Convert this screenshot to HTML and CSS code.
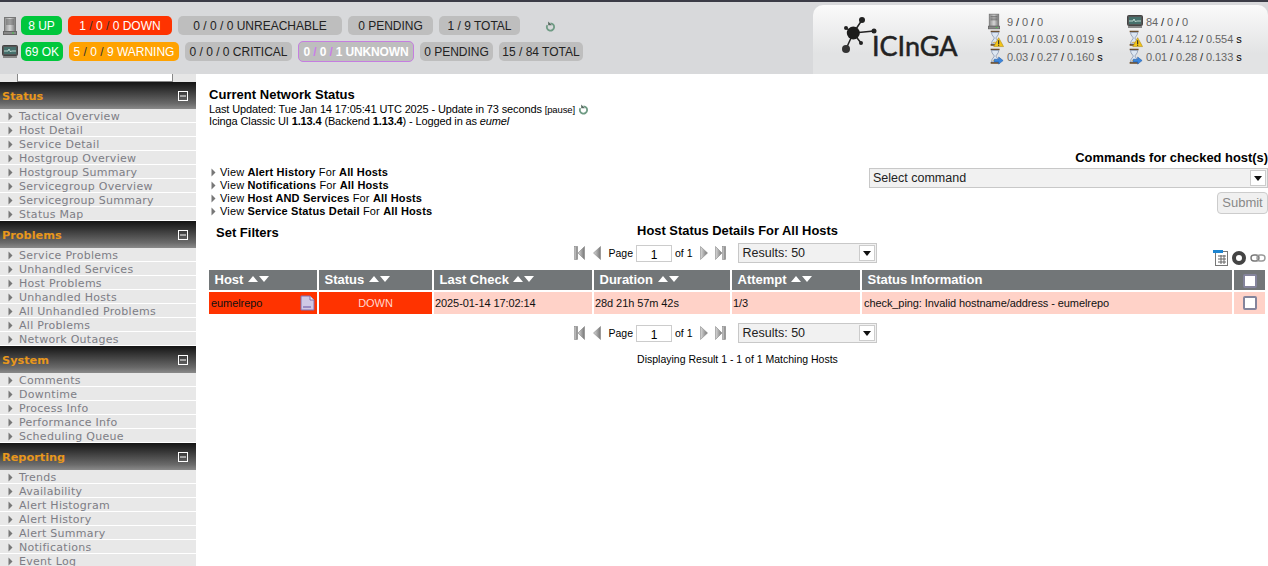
FILE: index.html
```html
<!DOCTYPE html>
<html lang="en">
<head>
<meta charset="utf-8">
<title>Current Network Status</title>
<link rel="stylesheet" href="styles.css">
</head>
<body>
<svg class="defs" width="0" height="0" aria-hidden="true">
  <defs>
    <linearGradient id="srv" x1="0" x2="1" y1="0" y2="0"><stop offset="0" stop-color="#8d8d8d"/><stop offset=".5" stop-color="#d5d5d5"/><stop offset="1" stop-color="#777"/></linearGradient>
    <linearGradient id="pg" x1="0" x2="1" y1="0" y2="0"><stop offset="0" stop-color="#d8d8d8"/><stop offset="1" stop-color="#777"/></linearGradient>
    <symbol id="server" viewBox="0 0 14 18"><rect x="1.5" y="0.5" width="11" height="14" fill="url(#srv)" stroke="#777"/><path d="M3 3h8M3 5h8M3 7h8" stroke="#666"/><rect x="0.5" y="14.5" width="13" height="3" fill="#888" stroke="#666"/><rect x="9" y="15.500" width="2" height="1" fill="#4c4"/></symbol>
    <symbol id="monitor" viewBox="0 0 16 13"><rect x="0.500" y="0.500" width="15" height="10" rx="1" fill="#555" stroke="#444"/><rect x="2" y="2" width="12" height="7" fill="#46706c"/><path d="M2 6h4l1-2 1.500 3 1-1h4.500" stroke="#d8f0e8" fill="none" stroke-width=".8"/><rect x="1" y="11" width="14" height="2" fill="#888"/></symbol>
    <symbol id="glass" viewBox="0 0 18 19"><path d="M3 1h10M3 16h10" stroke="#6b4a24" stroke-width="2"/><path d="M4 2h8c0 4-3 5-3 6.500S12 11 12 15H4c0-4 3-5 3-6.500S4 6 4 2z" fill="#dce6f2" stroke="#7a8aa6" stroke-width=".8"/><path d="M5 14c1-2 5-2 6 0z" fill="#d6b36a"/></symbol>
    <symbol id="warn" viewBox="0 0 18 19"><use href="#glass"/><path d="M12 8l5.500 10h-11z" fill="#f4c518" stroke="#a98510" stroke-width=".6"/><path d="M12 11v4" stroke="#222" stroke-width="1.200"/><circle cx="12" cy="16.500" r=".7" fill="#222"/></symbol>
    <symbol id="next" viewBox="0 0 18 19"><use href="#glass"/><path d="M7 12h5V9.500l5 4-5 4V15H7z" fill="#3c86dc" stroke="#1f5ba8" stroke-width=".6"/></symbol>
    <symbol id="refresh" viewBox="0 0 12 12"><path d="M6 2.500a4 4 0 1 1-3.500 2" fill="none" stroke="#6f9b84" stroke-width="2"/><path d="M3.500 0.500v4h4z" fill="#56685e"/></symbol>
    <symbol id="bullet" viewBox="0 0 5 9"><path d="M0.500 0.500l4 4-4 4z" fill="#777"/></symbol>
    <symbol id="first" viewBox="0 0 11 14"><rect x="0.500" y="0.500" width="3" height="13" fill="url(#pg)" stroke="#888" stroke-width=".6"/><path d="M10.500 0.500v13L4 7z" fill="url(#pg)" stroke="#888" stroke-width=".6"/></symbol>
    <symbol id="prev" viewBox="0 0 8 14"><path d="M7.500 0.500v13L0.500 7z" fill="url(#pg)" stroke="#888" stroke-width=".6"/></symbol>
    <symbol id="nxt" viewBox="0 0 8 14"><path d="M0.500 0.500v13L7.500 7z" fill="url(#pg)" stroke="#888" stroke-width=".6"/></symbol>
    <symbol id="last" viewBox="0 0 11 14"><rect x="7.500" y="0.500" width="3" height="13" fill="url(#pg)" stroke="#888" stroke-width=".6"/><path d="M0.500 0.500v13L7 7z" fill="url(#pg)" stroke="#888" stroke-width=".6"/></symbol>
    <symbol id="minus" viewBox="0 0 10 10"><rect x="0.500" y="0.500" width="9" height="9" fill="none" stroke="#fff"/><path d="M2 5h6" stroke="#fff"/></symbol>
    <symbol id="sort" viewBox="0 0 21 6"><path d="M0 6l5-6 5 6zM11 0h10l-5 6z" fill="#fff"/></symbol>
    <symbol id="doc" viewBox="0 0 15 16"><path d="M1 1h9l4 4v10H1z" fill="#cfc8e6" stroke="#8070b0"/><path d="M10 1v4h4" fill="#eee" stroke="#8070b0"/><path d="M3 11h8v2H3z" fill="#9a8cc4"/></symbol>
    <symbol id="grid" viewBox="0 0 15 16"><rect x="2.500" y="1.500" width="12" height="14" fill="#fff" stroke="#777"/><rect x="0" y="0" width="10" height="3" fill="#1d84d0"/><path d="M5 6h8M5 9h8M5 12h8M8 5v9M11 5v9" stroke="#666"/></symbol>
    <symbol id="disc" viewBox="0 0 14 14"><circle cx="7" cy="7" r="5" fill="none" stroke="#444" stroke-width="4"/></symbol>
    <symbol id="chain" viewBox="0 0 16 8"><rect x="1" y="1" width="8" height="6" rx="3" fill="none" stroke="#777" stroke-width="1.400"/><rect x="7" y="1" width="8" height="6" rx="3" fill="none" stroke="#999" stroke-width="1.400"/></symbol>
  </defs>
</svg>

<header class="top">
  <div class="summary">
    <div class="sumrow">
      <svg class="ic-server"><use href="#server"/></svg>
      <span class="pill ok p-up">8 UP</span>
      <span class="pill bad p-down">1 <i class="sl">/</i> 0 <i class="sl">/</i> 0 DOWN</span>
      <span class="pill p-unreach">0 / 0 / 0 UNREACHABLE</span>
      <span class="pill p-pend1">0 PENDING</span>
      <span class="pill p-tot1">1 / 9 TOTAL</span>
      <svg class="ic-refresh head-refresh"><use href="#refresh"/></svg>
    </div>
    <div class="sumrow">
      <svg class="ic-monitor"><use href="#monitor"/></svg>
      <span class="pill ok p-okk">69 OK</span>
      <span class="pill warn p-warn">5 <i class="sl">/</i> 0 <i class="sl">/</i> 9 WARNING</span>
      <span class="pill p-crit">0 / 0 / 0 CRITICAL</span>
      <span class="pill unk p-unk">0 <i class="sl-p">/</i> 0 <i class="sl-p">/</i> 1 UNKNOWN</span>
      <span class="pill p-pend2">0 PENDING</span>
      <span class="pill p-tot2">15 / 84 TOTAL</span>
    </div>
  </div>
  <div class="brand">
    <div class="logo">
      <svg class="logo-mark" viewBox="0 0 40 40"><g stroke="#222" stroke-width="1.500"><path d="M15.300 17L24 4M15.300 17L8 33M15.300 17L36 15M15.300 17L23 27M15.300 17L8 12"/></g><circle cx="15.300" cy="17" r="6.500" fill="#1c1c1c"/><circle cx="24" cy="4" r="3" fill="#222"/><circle cx="8" cy="33" r="4" fill="#333"/><circle cx="36" cy="15" r="2.500" fill="#222"/><circle cx="23" cy="27" r="2" fill="#222"/><circle cx="8" cy="12" r="2" fill="#222"/></svg>
      <span class="logo-text">ICInGA</span>
    </div>
    <div class="stats">
      <div class="stat"><svg class="st-icon st-s"><use href="#server"/></svg><span class="stat-v">9 <i>/</i> 0 <i>/</i> 0</span></div>
      <div class="stat"><svg class="st-icon"><use href="#warn"/></svg><span class="stat-v">0.01 <i>/</i> 0.03 <i>/</i> 0.019 <b>s</b></span></div>
      <div class="stat"><svg class="st-icon"><use href="#next"/></svg><span class="stat-v">0.03 <i>/</i> 0.27 <i>/</i> 0.160 <b>s</b></span></div>
    </div>
    <div class="stats">
      <div class="stat"><svg class="st-icon st-m"><use href="#monitor"/></svg><span class="stat-v">84 <i>/</i> 0 <i>/</i> 0</span></div>
      <div class="stat"><svg class="st-icon"><use href="#warn"/></svg><span class="stat-v">0.01 <i>/</i> 4.12 <i>/</i> 0.554 <b>s</b></span></div>
      <div class="stat"><svg class="st-icon"><use href="#next"/></svg><span class="stat-v">0.01 <i>/</i> 0.28 <i>/</i> 0.133 <b>s</b></span></div>
    </div>
  </div>
</header>

<div class="page">
  <nav class="side">
    <div class="search"></div>

    <h2 class="sec"><span>Status</span><svg class="minus"><use href="#minus"/></svg></h2>
    <ul class="menu">
      <li><svg><use href="#bullet"/></svg>Tactical Overview</li>
      <li><svg><use href="#bullet"/></svg>Host Detail</li>
      <li><svg><use href="#bullet"/></svg>Service Detail</li>
      <li><svg><use href="#bullet"/></svg>Hostgroup Overview</li>
      <li><svg><use href="#bullet"/></svg>Hostgroup Summary</li>
      <li><svg><use href="#bullet"/></svg>Servicegroup Overview</li>
      <li><svg><use href="#bullet"/></svg>Servicegroup Summary</li>
      <li><svg><use href="#bullet"/></svg>Status Map</li>
    </ul>

    <h2 class="sec"><span>Problems</span><svg class="minus"><use href="#minus"/></svg></h2>
    <ul class="menu">
      <li><svg><use href="#bullet"/></svg>Service Problems</li>
      <li><svg><use href="#bullet"/></svg>Unhandled Services</li>
      <li><svg><use href="#bullet"/></svg>Host Problems</li>
      <li><svg><use href="#bullet"/></svg>Unhandled Hosts</li>
      <li><svg><use href="#bullet"/></svg>All Unhandled Problems</li>
      <li><svg><use href="#bullet"/></svg>All Problems</li>
      <li><svg><use href="#bullet"/></svg>Network Outages</li>
    </ul>

    <h2 class="sec"><span>System</span><svg class="minus"><use href="#minus"/></svg></h2>
    <ul class="menu">
      <li><svg><use href="#bullet"/></svg>Comments</li>
      <li><svg><use href="#bullet"/></svg>Downtime</li>
      <li><svg><use href="#bullet"/></svg>Process Info</li>
      <li><svg><use href="#bullet"/></svg>Performance Info</li>
      <li><svg><use href="#bullet"/></svg>Scheduling Queue</li>
    </ul>

    <h2 class="sec"><span>Reporting</span><svg class="minus"><use href="#minus"/></svg></h2>
    <ul class="menu">
      <li><svg><use href="#bullet"/></svg>Trends</li>
      <li><svg><use href="#bullet"/></svg>Availability</li>
      <li><svg><use href="#bullet"/></svg>Alert Histogram</li>
      <li><svg><use href="#bullet"/></svg>Alert History</li>
      <li><svg><use href="#bullet"/></svg>Alert Summary</li>
      <li><svg><use href="#bullet"/></svg>Notifications</li>
      <li><svg><use href="#bullet"/></svg>Event Log</li>
    </ul>
  </nav>

  <main class="main">
    <section class="info">
      <h1 class="title">Current Network Status</h1>
      <div class="line">Last Updated: Tue Jan 14 17:05:41 UTC 2025 - Update in 73 seconds <small>[pause]</small> <svg class="ic-refresh-s"><use href="#refresh"/></svg></div>
      <div class="line">Icinga Classic UI <b>1.13.4</b> (Backend <b>1.13.4</b>) - Logged in as <i>eumel</i></div>
    </section>

    <section class="tools">
      <ul class="links">
        <li><svg><use href="#bullet"/></svg>View <b>Alert History</b> For <b>All Hosts</b></li>
        <li><svg><use href="#bullet"/></svg>View <b>Notifications</b> For <b>All Hosts</b></li>
        <li><svg><use href="#bullet"/></svg>View <b>Host AND Services</b> For <b>All Hosts</b></li>
        <li><svg><use href="#bullet"/></svg>View <b>Service Status Detail</b> For <b>All Hosts</b></li>
      </ul>
      <div class="commands">
        <div class="cmd-title">Commands for checked host(s)</div>
        <div class="select cmd-select"><span>Select command</span><span class="arrow"></span></div>
        <div class="submit">Submit</div>
      </div>
    </section>

    <section class="mid">
      <div class="filters">Set Filters</div>
      <div class="mid-title">Host Status Details For All Hosts</div>
    </section>

    <div class="pager">
      <svg class="pg-w"><use href="#first"/></svg>
      <svg class="pg-n"><use href="#prev"/></svg>
      <span class="pg-label">Page</span><span class="pg-input">1</span><span class="pg-of">of 1</span>
      <svg class="pg-n"><use href="#nxt"/></svg>
      <svg class="pg-w"><use href="#last"/></svg>
      <div class="select res-select"><span>Results: 50</span><span class="arrow"></span></div>
    </div>

    <div class="tbl-icons">
      <svg class="ti-grid"><use href="#grid"/></svg>
      <svg class="ti-disc"><use href="#disc"/></svg>
      <svg class="ti-chain"><use href="#chain"/></svg>
    </div>

    <table class="status">
      <colgroup>
        <col class="c1"><col class="c2"><col class="c3"><col class="c4"><col class="c5"><col class="c6"><col class="c7">
      </colgroup>
      <thead>
        <tr>
          <th>Host <svg class="sort"><use href="#sort"/></svg></th>
          <th>Status <svg class="sort"><use href="#sort"/></svg></th>
          <th>Last Check <svg class="sort"><use href="#sort"/></svg></th>
          <th>Duration <svg class="sort"><use href="#sort"/></svg></th>
          <th>Attempt <svg class="sort"><use href="#sort"/></svg></th>
          <th>Status Information</th>
          <th class="chk"><span class="box box-head"></span></th>
        </tr>
      </thead>
      <tbody>
        <tr>
          <td class="down host-cell"><span>eumelrepo</span><svg class="doc"><use href="#doc"/></svg></td>
          <td class="down st-cell">DOWN</td>
          <td>2025-01-14 17:02:14</td>
          <td>28d 21h 57m 42s</td>
          <td>1/3</td>
          <td class="msg">check_ping: Invalid hostname/address - eumelrepo</td>
          <td class="chk"><span class="box"></span></td>
        </tr>
      </tbody>
    </table>

    <div class="pager pager-bottom">
      <svg class="pg-w"><use href="#first"/></svg>
      <svg class="pg-n"><use href="#prev"/></svg>
      <span class="pg-label">Page</span><span class="pg-input">1</span><span class="pg-of">of 1</span>
      <svg class="pg-n"><use href="#nxt"/></svg>
      <svg class="pg-w"><use href="#last"/></svg>
      <div class="select res-select"><span>Results: 50</span><span class="arrow"></span></div>
    </div>

    <div class="displaying">Displaying Result 1 - 1 of 1 Matching Hosts</div>
  </main>
</div>
</body>
</html>
```
FILE: styles.css
```css
* { box-sizing: border-box; }
html, body { margin: 0; height: 100%; overflow: hidden; background: #fff; }
body { font-family: "Liberation Sans", Arial, sans-serif; font-size: 12px; color: #000; }
.defs { position: absolute; }
ul { list-style: none; margin: 0; padding: 0; }
svg { display: block; flex: none; }

/* header */
.top { height: 74px; background: #d8d9db; border-top: 2px solid #3b3c46; display: flex; justify-content: space-between; }
.summary { padding: 14px 0 0 3px; display: flex; flex-direction: column; gap: 7px; }
.sumrow { display: flex; align-items: center; gap: 6px; height: 19px; }
.ic-server { width: 14px; height: 18px; margin-right: -2px; }
.ic-monitor { width: 16px; height: 13px; margin-right: -3px; margin-left: -1px; }
.pill { height: 19px; line-height: 20px; border-radius: 5px; background: #bebebe; color: #222; font-size: 12px; text-align: center; white-space: nowrap; }
.pill i { font-style: normal; }
.sl { color: #333; }
.sl-p { color: #c97fe8; }
.ok { background: #00c73c; color: #fff; }
.bad { background: #ff3300; color: #fff; }
.warn { background: #ffa200; color: #fff; }
.unk { background: #bebebe; color: #fff; font-weight: bold; border: 1px solid #c57ee0; line-height: 20px; height: 21px; letter-spacing: -.15px; }
.p-up { width: 41px; }
.p-down { width: 104px; }
.p-unreach { width: 164px; }
.p-pend1 { width: 85px; }
.p-tot1 { width: 81px; }
.p-okk { width: 42px; }
.p-warn { width: 110px; }
.p-crit { width: 107px; }
.p-unk { width: 116px; }
.p-pend2 { width: 73px; }
.p-tot2 { width: 84px; }
.ic-refresh { width: 11px; height: 11px; }
.head-refresh { margin: 2px 0 0 19px; }

.brand { width: 455px; margin-top: 3px; border-radius: 10px 10px 0 0; background: linear-gradient(#fafafa, #e2e3e4 70%); display: flex; }
.logo { width: 175px; padding: 11px 0 0 25px; display: flex; }
.logo-mark { width: 40px; height: 40px; }
.logo-text { font-family: "Lato", sans-serif; font-size: 27px; font-weight: 400; color: #222; line-height: 30px; margin: 15px 0 0 -6px; -webkit-text-stroke: .5px #222; }
.stats { width: 139px; padding-top: 8px; display: flex; flex-direction: column; }
.stat { height: 17.500px; display: flex; align-items: center; gap: 3px; }
.st-icon { width: 16px; height: 18px; }
.st-s { width: 12px; margin: 0 4px 0 0; height: 17px; }
.st-m { height: 13px; }
.stat-v { color: #666; font-size: 11px; letter-spacing: -.08px; }
.stat-v i { font-style: normal; color: #222; }
.stat-v b { color: #000; font-weight: normal; }

/* layout */
.page { display: flex; height: calc(100vh - 74px); overflow: hidden; }
.side { width: 196px; flex: none; background: linear-gradient(#e6e6e6 8px, #fff 8px); }
.search { height: 8px; margin-left: 17px; background: #fff; border: 1px solid #888; border-top: 0; width: 156px; }
.sec { margin: 0; height: 27px; background: linear-gradient(#141414, #6a6a6a 80%, #8a8a8a); display: flex; align-items: center; justify-content: space-between; padding: 1px 8px 0 2px; font-family: "DejaVu Sans", Verdana, sans-serif; font-size: 11.300px; font-weight: bold; color: #e8971c; }
.minus { width: 10px; height: 10px; }
.menu li { height: 14px; background: #e8e8e8; border-bottom: 1px solid #fff; display: flex; align-items: center; padding: 1px 0 0 8px; font-family: "DejaVu Sans", Verdana, sans-serif; font-size: 11px; color: #7d7d85; white-space: nowrap; letter-spacing: .28px; }
.menu li svg { width: 5px; height: 9px; margin-right: 6px; }

.main { flex: 1; min-width: 0; padding: 13px 0 0 13px; }
.title { margin: 0; font-size: 13px; font-weight: bold; line-height: 16px; letter-spacing: .03px; }
.line { font-size: 11px; line-height: 13px; white-space: nowrap; letter-spacing: -.13px; }
.line + .line { margin-top: -1px; }
.line small { font-size: 9.500px; }
.ic-refresh-s { display: inline-block; width: 11px; height: 11px; vertical-align: -2px; }

.tools { display: flex; justify-content: space-between; margin-top: 22px; }
.links { padding-top: 16px; }
.links li { height: 13px; line-height: 13px; font-size: 11px; letter-spacing: .16px; white-space: nowrap; }
.links li svg { display: inline-block; width: 5px; height: 9px; margin: 0 4px 0 2px; vertical-align: -1px; }
.commands { width: 399px; display: flex; flex-direction: column; align-items: flex-end; }
.cmd-title { font-size: 12.900px; font-weight: bold; line-height: 15px; height: 18px; }
.select { border: 1px solid #c8c8c8; background: #f1f1f1; display: flex; justify-content: space-between; align-items: center; padding: 0 1px 0 3px; font-size: 12.500px; color: #222; }
.cmd-select { width: 399px; height: 20px; }
.arrow { width: 16px; height: 16px; background: #fff; border: 1px solid #ccc; position: relative; }
.arrow::after { content: ""; position: absolute; left: 3px; top: 5px; border: 4px solid transparent; border-top: 5px solid #111; border-bottom: 0; }
.submit { width: 51px; height: 22px; margin-top: 4px; border: 1px solid #ccc; border-radius: 4px; background: #f0f0f0; color: #888; font-size: 13px; line-height: 20px; text-align: center; }

.mid { margin-top: 5px; height: 20px; width: 1057px; display: grid; grid-template-columns: 1fr; }
.filters, .mid-title { grid-area: 1 / 1; }
.filters { margin: 2px 0 0 7px; font-size: 13px; font-weight: bold; line-height: 15px; }
.mid-title { text-align: center; font-size: 12.900px; font-weight: bold; line-height: 15px; }

.pager { display: flex; align-items: center; justify-content: center; width: 1057px; height: 20px; padding-right: 24px; font-size: 10.500px; }
.pg-w { width: 11px; height: 14px; margin-right: 8px; }
.pg-n { width: 8px; height: 14px; margin-right: 7px; }
.pg-label { margin-right: 3px; }
.pg-input { width: 36px; height: 17px; margin-right: 3px; border: 1px solid #ccc; text-align: center; font-size: 12px; line-height: 18px; }
.pg-of { margin-right: 7px; }
.res-select { width: 139px; height: 20px; margin-left: 4px; font-size: 12.500px; padding-left: 4px; }

.tbl-icons { display: flex; justify-content: flex-end; align-items: center; gap: 4px; height: 17px; margin-top: -13px; padding-right: 1px; width: 1058px; position: relative; top: -1px; }
.ti-grid { width: 15px; height: 16px; }
.ti-disc { width: 14px; height: 14px; }
.ti-chain { width: 16px; height: 8px; }

.status { border-collapse: separate; border-spacing: 2px; table-layout: fixed; width: 1060px; margin: 1px 0 0 -2px; }
.c1 { width: 108px; } .c2 { width: 113px; } .c3 { width: 158px; } .c4 { width: 136px; } .c5 { width: 128px; } .c6 { width: 370px; } .c7 { width: 31px; }
.status th { height: 20px; background: #727678; color: #fff; font-size: 13px; font-weight: bold; text-align: left; padding: 0 5.500px; white-space: nowrap; line-height: 20px; }
.sort { display: inline-block; width: 21px; height: 6px; vertical-align: 2px; margin-left: 1px; }
.status td { height: 22px; background: #ffd2c8; font-size: 11px; padding: 0 1px; color: #111; white-space: nowrap; letter-spacing: -.08px; }
.status td.down { background: #ff3300; }
.status td.host-cell { position: relative; padding-left: 2px; }
.status td.msg { padding-left: 2px; }
.doc { position: absolute; right: 2px; top: 3px; width: 15px; height: 16px; }
.status td.st-cell { color: #ffd8d0; text-align: center; }
.status .chk { padding: 0; text-align: center; }
.box { display: inline-block; width: 14px; height: 14px; border: 2px solid #84849c; border-radius: 2px; background: #fff; vertical-align: middle; }
.pager-bottom { margin-top: 7px; }
.displaying { width: 1057px; margin-top: 10px; text-align: center; font-size: 10.500px; line-height: 13px; }
```
